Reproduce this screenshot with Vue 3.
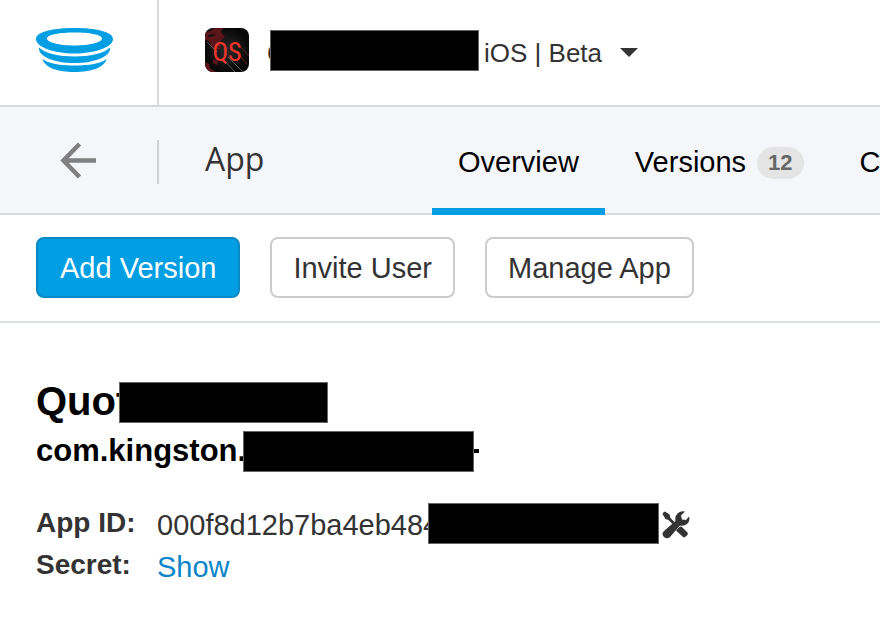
<script setup>
const tabs = [
  { label: 'Overview', active: true },
  { label: 'Versions', count: 12 },
  { label: 'C' },
]
const actions = [
  { label: 'Add Version', primary: true },
  { label: 'Invite User' },
  { label: 'Manage App' },
]
</script>

<template>
  <div class="page">
    <header class="top">
      <a class="brand" href="#" aria-label="Home">
        <svg width="78" height="46" viewBox="0 0 78 46">
          <g fill="#009ee3">
            <path fill-rule="evenodd" d="M38.500 1C59 1 77 4.500 77 12C77 20 59 26.500 38.500 26.500S0 20 0 12C0 4.500 18 1 38.500 1ZM38.500 5.500C24 5.500 11 7.500 11 11.500C11 15.500 24 18.500 38.500 18.500S66 15.500 66 11.500C66 7.500 53 5.500 38.500 5.500Z" />
            <path d="M3 20.500C9 26.500 23 29.500 38.500 29.500S68 26.500 74 20.500C75 30 58 36 38.500 36S2 30 3 20.500Z" />
            <path d="M6.500 32C12 36.500 24 38.500 38.500 38.500S65 36.500 70.500 32C68 41 55 45 38.500 45S9 41 6.500 32Z" />
          </g>
        </svg>
      </a>
      <button class="switcher" type="button">
        <svg class="app-icon" width="44" height="44" viewBox="0 0 44 44">
          <defs>
            <clipPath id="tile"><rect width="44" height="44" rx="8" /></clipPath>
            <radialGradient id="glow"><stop offset="0" stop-color="#292929" /><stop offset="1" stop-color="#080808" /></radialGradient>
          </defs>
          <g clip-path="url(#tile)">
            <rect width="44" height="44" fill="url(#glow)" />
            <path d="M0 4L5 3L10 0H18L16 4L20 9L16 12L15 21L9 22L6 17L4 13L0 12ZM0 34L4 36L5 40L11 44H0ZM8 31L13 33L12 37L8 35Z" fill="#5a1519" />
            <path d="M2 8Q6 5 11 7L5 9Z" fill="#100b0c" />
            <path d="M17 30L30 44M23 29L38 44M2 14L12 24" stroke="#777" stroke-width=".7" />
            <path d="M35 18L44 28M32 24L42 36" stroke="#8d2925" stroke-width=".8" />
            <text class="mono" x="22" y="33" text-anchor="middle" fill="#f4352c">QS</text>
          </g>
        </svg>
        <span class="switch-text"><span class="peek">Q</span><span class="redacted name-bar"></span><span class="platform">iOS | Beta</span></span>
        <svg class="caret" width="18" height="10" viewBox="0 0 18 10"><path d="M0 0H18L9 9Z" fill="#333" /></svg>
      </button>
    </header>

    <nav class="subnav">
      <a class="back" href="#" aria-label="Back">
        <svg width="38" height="38" viewBox="0 0 38 38"><path d="M19.500 2L3.500 18.500L19.500 35M4 18.500H36" fill="none" stroke="#808080" stroke-width="4.500" /></svg>
      </a>
      <span class="section">App</span>
      <div class="tabs">
        <a v-for="t in tabs" :key="t.label" class="tab" :class="{ active: t.active }" href="#">{{ t.label }}<span v-if="t.count" class="count">{{ t.count }}</span></a>
      </div>
    </nav>

    <div class="actions">
      <button v-for="a in actions" :key="a.label" type="button" class="btn" :class="{ primary: a.primary }">{{ a.label }}</button>
    </div>

    <main class="details">
      <h1><span class="clip title-clip">Quot</span><span class="redacted name-bar"></span></h1>
      <h2><span class="clip bundle-clip">com.kingston.</span><span class="redacted id-bar"></span><span class="dash"></span></h2>
      <dl>
        <dt>App ID:</dt>
        <dd><span class="clip id-clip">000f8d12b7ba4eb484</span><span class="redacted id-bar"></span>
          <button class="tools" type="button" aria-label="Tools">
            <svg width="28" height="28" viewBox="0 0 28 28" fill="#333">
              <path d="M.5 3Q1 1 3 .5L7.500 3.500L8.500 7L13 11.500L11 13.500L6.500 9L3.500 8Z" />
              <path d="M17.500 16Q19 15 20.500 16.500L25.500 21.500Q26.500 23 25 24.500L23 26Q22 27 20.500 25.500L14 19.500Z" />
              <path d="M2 20L13.500 10Q12.500 5 16 2Q19 -.5 23 .5L19 4.500L20 8.500L24 9L27 5.500Q28.500 10 25 13Q22 15.500 18 14.500L8 26Q5 28.500 2 26Q-1 23 2 20Z" />
            </svg>
          </button>
        </dd>
        <dt>Secret:</dt>
        <dd><a class="show" href="#">Show</a></dd>
      </dl>
    </main>
  </div>
</template>

<style>
body { margin: 0; background: #fff; overflow-x: hidden; }
</style>

<style scoped>
.page { font-family: "Liberation Sans", Arial, sans-serif; font-size: 29px; color: #333; overflow: hidden; }
a { color: inherit; text-decoration: none; }
button { font: inherit; color: inherit; background: none; border: 0; padding: 0; cursor: pointer; }
svg { display: block; flex: none; }
.top { display: flex; height: 105px; border-bottom: 2px solid #d8d8d8; }
.brand { flex: none; box-sizing: border-box; width: 159px; padding: 27px 0 0 36px; border-right: 2px solid #dcdcdc; }
.switcher { display: flex; align-items: center; height: 44px; margin: 28px 0 0 46px; font-size: 26px; white-space: nowrap; }
.mono { font-family: "Roboto Condensed", "Open Sans", sans-serif; font-size: 26px; }
.switch-text { display: flex; align-items: center; height: 44px; margin-left: 18px; }
.peek { width: 3px; overflow: hidden; }
.peek, .platform { padding-top: 6px; }
.redacted { flex: none; box-sizing: border-box; height: 41px; background: #000; border: 1px solid #666; }
.name-bar { width: 209px; }
.id-bar { width: 231px; }
.platform { margin-left: 5px; }
.caret { margin: 6px 0 0 18px; }
.subnav { display: flex; height: 106px; background: #f5f6fa; border-bottom: 2px solid #dcdcdc; }
.back { flex: none; box-sizing: border-box; width: 99px; height: 44px; margin: 33px 0 0 60px; padding-top: 2px; border-right: 2px solid #d0d1d4; }
.section { flex: none; width: 227px; margin-left: 46px; font-family: "Open Sans", sans-serif; font-size: 32px; line-height: 104px; }
.tabs { display: flex; gap: 4px; }
.tab { display: flex; align-items: center; box-sizing: border-box; height: 108px; padding: 10px 26px 0; color: #000; border-bottom: 7px solid transparent; white-space: nowrap; }
.tab.active { border-color: #009ee3; }
.count { margin-left: 11px; padding: 0 11px; border-radius: 16px; background: #e4e4e4; color: #666; font-size: 22px; font-weight: bold; line-height: 32px; }
.actions { display: flex; flex-wrap: wrap; gap: 30px; padding: 22px 36px 23px; border-bottom: 2px solid #dde0e4; }
.btn { height: 61px; padding: 2px 21px 0; border: 2px solid #ccc; border-radius: 8px; background: #fff; }
.primary { padding: 2px 22px 0; background: #009ee3; border-color: #0888c5; color: #fff; }
.details { padding: 57px 36px 30px; }
h1, h2 { display: flex; align-items: center; margin: 0; color: #000; }
h1 { font-size: 40px; line-height: 42px; }
h2 { margin-top: 6px; font-size: 31px; line-height: 42px; }
.clip { flex: none; overflow: hidden; }
.title-clip { width: 83px; padding-bottom: 4px; margin-bottom: -2px; }
.bundle-clip { width: 207px; }
.dash { width: 5px; height: 4px; background: #000; }
dl { display: grid; grid-template-columns: 121px 1fr; margin: 30px 0 0; line-height: 42px; }
dt { font-size: 28px; font-weight: bold; }
dd { display: flex; align-items: center; margin: 0; }
.id-clip, .show { padding-top: 2px; margin-bottom: -2px; }
.id-clip { width: 271px; }
.tools { margin: 4px 0 0 3px; }
.show { color: #0a84c9; }
</style>
